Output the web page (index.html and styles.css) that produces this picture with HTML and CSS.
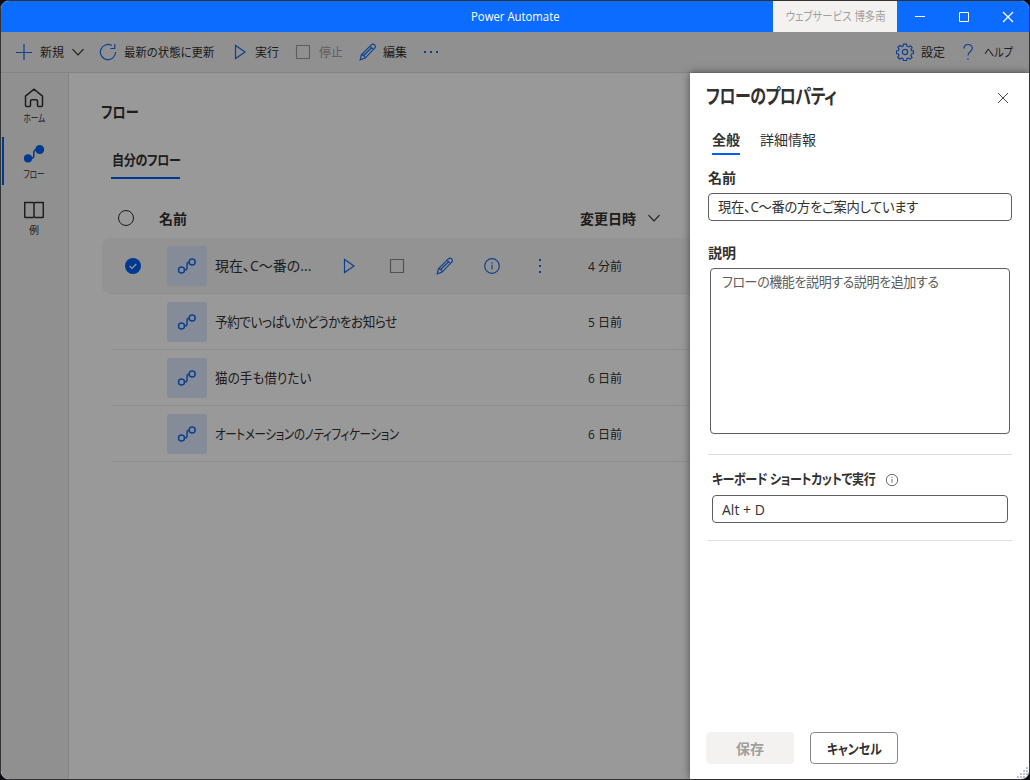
FILE: index.html
```html
<!DOCTYPE html>
<html lang="ja">
<head>
  <meta charset="UTF-8">
  <title>Power Automate</title>
  <link rel="stylesheet" href="styles.css">
</head>
<body>
  <!-- 共通アイコン -->
  <svg class="symbols" width="0" height="0">
    <symbol id="play" viewBox="0 0 16 16"><path d="M2.500 1.500v13l9.500-6.500z"/></symbol>
    <symbol id="stop" viewBox="0 0 16 16"><path d="M1.500 1.500h13v13h-13z"/></symbol>
    <symbol id="pencil" viewBox="0 0 18 18"><path d="M1.200 16.800l1.200-5L12.300 1.900a2.200 2.200 0 0 1 3.300 0 2.200 2.200 0 0 1 0 3.300L6.200 15.100zM2.400 11.800q3.400 0 3.800 3.300M11 3.200l3.400 3.400M4.400 12.800L12.600 4.700"/></symbol>
    <symbol id="flow" viewBox="0 0 20 20"><circle cx="4.500" cy="14" r="3"/><circle cx="15.200" cy="6" r="3"/><path d="M7.500 14h.5c1.500 0 2-1 2-2.500V9c0-2 .6-3 2.200-3"/></symbol>
    <symbol id="chevron" viewBox="0 0 14 14"><path d="M1.500 4.200L7 9.800l5.500-5.600"/></symbol>
    <symbol id="close" viewBox="0 0 12 12"><path d="M1 1l10 10M11 1L1 11"/></symbol>
    <symbol id="info" viewBox="0 0 18 18"><circle cx="9" cy="9" r="7.300"/><path d="M9 7.800v4.700M9 5v1.400"/></symbol>
  </svg>

  <div class="window">
    <header class="titlebar">
      <div class="app-title"><span class="narrow">Power Automate</span></div>
      <div class="account"><span class="narrow">ウェブサービス 博多南</span></div>
      <div class="win-button"><svg width="12" height="12" viewBox="0 0 12 12"><path d="M1 5.500h10"/></svg></div>
      <div class="win-button"><svg width="12" height="12" viewBox="0 0 12 12"><path d="M1.500 1.500h9v9h-9z"/></svg></div>
      <div class="win-button"><svg class="win-close" width="12" height="12"><use href="#close"/></svg></div>
    </header>

    <div class="client">
      <div class="toolbar">
        <div class="tool tool-new">
          <svg width="16" height="16" viewBox="0 0 16 16"><path d="M0 8.500h16M8 0v16"/></svg>
          <span>新規</span>
          <svg class="tool-chevron" width="14" height="14"><use href="#chevron"/></svg>
        </div>
        <div class="tool tool-refresh">
          <svg width="18" height="18" viewBox="0 0 18 18"><path d="M12.800 2.500A7.600 7.600 0 1 0 16.600 9M15.800 1v4.500h-4.500"/></svg>
          <span class="narrow">最新の状態に更新</span>
        </div>
        <div class="tool tool-run">
          <svg width="16" height="16"><use href="#play"/></svg>
          <span>実行</span>
        </div>
        <div class="tool tool-stop">
          <svg width="16" height="16"><use href="#stop"/></svg>
          <span>停止</span>
        </div>
        <div class="tool tool-edit">
          <svg width="18" height="18"><use href="#pencil"/></svg>
          <span>編集</span>
        </div>
        <svg class="dots" width="16" height="16" viewBox="0 0 16 16"><path d="M1 7h2v2H1zM7 7h2v2H7zM13 7h2v2h-2z"/></svg>
        <div class="tool tool-settings">
          <svg width="18" height="18" viewBox="0 0 18 18"><circle cx="9" cy="9" r="2.700"/><path d="M7.500 1.200h3l.5 2 1.500.7 2-1.200 1.600 2-1.100 1.700.5 1.300 2 .4v2.400l-2 .5-.7 1.500 1.200 1.900-2 1.800-1.800-1.100-1.300.6-.4 2h-3l-.5-2-1.400-.7-1.900 1.200-1.900-2 1.200-1.700-.6-1.500-2-.5V8l2-.5.7-1.400-1.200-1.900 2-1.700 1.700 1.100L7 3.200z"/></svg>
          <span>設定</span>
        </div>
        <div class="tool tool-help">
          <svg width="12" height="18" viewBox="0 0 12 18"><path d="M2 5.500C2 3 3.500 1.500 6 1.500s4.300 1.500 4.300 3.800C10.300 8.300 6 8.700 6 12.500M6 15.500v1.500"/></svg>
          <span class="narrow">ヘルプ</span>
        </div>
      </div>

      <div class="body">
        <nav class="sidebar">
          <div class="nav-item">
            <svg width="20" height="20" viewBox="0 0 20 20"><path d="M1.500 8.200L10 1.200l8.500 7v9.300q0 1-1 1h-3q-1 0-1-1v-4.300q0-1.500-1.500-1.500H8q-1.500 0-1.500 1.500v4.300q0 1-1 1h-3q-1 0-1-1z"/></svg>
            <span class="narrow">ホーム</span>
          </div>
          <div class="nav-item active">
            <svg width="20" height="20" viewBox="0 0 20 20"><circle cx="4" cy="14.400" r="3.300"/><circle cx="15.700" cy="5.500" r="3.700"/><path class="link" d="M7 14.400c2 0 2.800-1 2.800-3V9c0-2 1-3.400 3-3.400"/></svg>
            <span class="narrow">フロー</span>
          </div>
          <div class="nav-item">
            <svg width="20" height="20" viewBox="0 0 20 20"><path d="M.7 2.500H9q1 0 1 1v14.300q0-.3-1-.3H1.500q-.8 0-.8-.8zM10 3.500q0-1 1-1h8.300v14.200q0 .8-.8.8H11q-1 0-1 .3"/></svg>
            <span>例</span>
          </div>
        </nav>

        <main class="main">
          <h1><span class="narrow">フロー</span></h1>
          <div class="tab-my"><span class="narrow">自分のフロー</span></div>
          <div class="list-header">
            <span class="radio"></span>
            <span class="col-name">名前</span>
            <span class="col-date">変更日時</span>
            <svg width="14" height="14"><use href="#chevron"/></svg>
          </div>
          <div class="row selected">
            <div class="check"><svg width="10" height="10" viewBox="0 0 10 10"><path d="M1.700 5l2.300 2.300 4.300-4.300"/></svg></div>
            <div class="tile"><svg width="20" height="20"><use href="#flow"/></svg></div>
            <div class="name">現在、C～番の...</div>
            <div class="actions">
              <svg width="16" height="16"><use href="#play"/></svg>
              <svg class="gray" width="16" height="16"><use href="#stop"/></svg>
              <svg width="18" height="18"><use href="#pencil"/></svg>
              <svg width="18" height="18"><use href="#info"/></svg>
              <svg class="dots-v" width="16" height="16" viewBox="0 0 16 16"><path d="M7 1h2v2H7zM7 7h2v2H7zM7 13h2v2H7z"/></svg>
            </div>
            <div class="date">4 分前</div>
          </div>
          <div class="row">
            <div class="check"></div>
            <div class="tile"><svg width="20" height="20"><use href="#flow"/></svg></div>
            <div class="name"><span class="narrow n2">予約でいっぱいかどうかをお知らせ</span></div>
            <div class="date">5 日前</div>
          </div>
          <div class="row">
            <div class="check"></div>
            <div class="tile"><svg width="20" height="20"><use href="#flow"/></svg></div>
            <div class="name"><span class="narrow n3">猫の手も借りたい</span></div>
            <div class="date">6 日前</div>
          </div>
          <div class="row">
            <div class="check"></div>
            <div class="tile"><svg width="20" height="20"><use href="#flow"/></svg></div>
            <div class="name"><span class="narrow n4">オートメーションのノティフィケーション</span></div>
            <div class="date">6 日前</div>
          </div>
        </main>
      </div>

      <div class="overlay"></div>

      <aside class="panel">
        <div class="panel-head">
          <h2><span class="narrow">フローのプロパティ</span></h2>
          <svg width="12" height="12"><use href="#close"/></svg>
        </div>
        <div class="panel-tabs">
          <span class="tab current">全般</span>
          <span class="tab">詳細情報</span>
        </div>
        <label class="label">名前</label>
        <div class="field field-name"><span class="narrow">現在、C～番の方をご案内しています</span></div>
        <label class="label label-desc">説明</label>
        <div class="field field-desc"><span class="narrow">フローの機能を説明する説明を追加する</span></div>
        <div class="shortcut">
          <div class="shortcut-label">
            <span class="narrow">キーボード ショートカットで実行</span>
            <svg width="14" height="14"><use href="#info"/></svg>
          </div>
          <div class="field field-key">Alt + D</div>
        </div>
        <div class="panel-footer">
          <button class="btn btn-save" disabled>保存</button>
          <button class="btn btn-cancel"><span class="narrow">キャンセル</span></button>
        </div>
        <svg class="grip" width="12" height="12" viewBox="0 0 12 12"><path d="M9 0h2v2H9zM6 3h2v2H6zM9 3h2v2H9zM3 6h2v2H3zM6 6h2v2H6zM9 6h2v2H9zM0 9h2v2H0zM3 9h2v2H3zM6 9h2v2H6z"/></svg>
      </aside>
    </div>
  </div>
</body>
</html>
```
FILE: styles.css
```css
* { box-sizing: border-box; }
body {
  margin: 0; background: #0c0c14; color: #323130; overflow: hidden;
  font-family: "Open Sans", "Noto Sans CJK JP", sans-serif; font-size: 14px;
  font-feature-settings: "palt";
}
svg { display: block; flex: none; fill: none; stroke: currentColor; stroke-width: 1.2; }
.symbols { position: absolute; }
/* 幅の狭いUI書体 */
.narrow { display: inline-block; transform-origin: left center; white-space: nowrap; }

.window {
  width: 1030px; height: 780px; border: 1px solid #333; border-radius: 9px;
  overflow: hidden; display: flex; flex-direction: column; background: #fff;
}

/* タイトルバー */
.titlebar { height: 31px; flex: none; display: flex; align-items: center; background: #0b6cff; color: #fff; }
.app-title { width: 303px; margin-left: 470px; font-size: 12px; white-space: nowrap; }
.app-title .narrow { transform: scaleX(0.945); }
.account {
  width: 124px; height: 31px; line-height: 31px; text-align: center; white-space: nowrap;
  background: #f3f2f1; color: #a19f9d; font-size: 12px;
}
.account .narrow { transform: scaleX(0.87); transform-origin: center; }
.win-button { width: 44px; padding-left: 1px; display: flex; justify-content: center; }
.win-button svg { stroke-width: 1; }
.win-button .win-close { stroke-width: 1.3; }

.client { position: relative; flex: 1; display: flex; flex-direction: column; min-height: 0; }

/* ツールバー */
.toolbar {
  height: 41px; flex: none; display: flex; align-items: center;
  padding-left: 15px; background: #f0f0f0; border-bottom: 1px solid #dcdcdc; font-size: 12px;
}
.tool { display: flex; align-items: center; white-space: nowrap; }
.tool svg { color: #1a6cf0; }
.tool-new { width: 83px; gap: 8px; }
.tool-new .tool-chevron { color: #323130; margin-left: -1px; }
.tool-refresh { width: 134px; gap: 7px; }
.tool-refresh .narrow { transform: scaleX(0.95); }
.tool-run { width: 62px; gap: 6px; }
.tool-stop { width: 64px; gap: 8px; color: #a19f9d; }
.tool-stop svg { color: #a19f9d; }
.tool-edit { width: 64px; gap: 6px; }
.dots, .dots-v { fill: #1a6cf0; stroke: none; }
.tool-settings { margin-left: auto; width: 66px; gap: 7px; }
.tool-help { width: 67px; gap: 10px; }
.tool-help .narrow { transform: scaleX(0.84); }

/* サイドバー */
.body { flex: 1; display: flex; }
.sidebar {
  width: 68px; padding: 8px 0 0 1px; background: #f0f0f0; border-right: 1px solid #dcdcdc;
  display: flex; flex-direction: column; gap: 8px;
}
.nav-item {
  height: 48px; padding: 7px 4px 0 0; border-left: 2px solid transparent;
  display: flex; flex-direction: column; align-items: center; gap: 3px;
  font-size: 10px; line-height: 14px;
}
.nav-item .narrow { transform: scaleX(0.77); transform-origin: center; }
.nav-item svg { stroke-width: 1.5; }
.nav-item.active { border-color: #0060f0; }
.nav-item.active svg { color: #0060f0; fill: #0060f0; }
.nav-item .link { fill: none; }

/* フロー一覧 */
.main { flex: 1; padding: 26px 0 0 33px; white-space: nowrap; }
h1 { margin: 0 0 25px -1px; font-size: 16px; line-height: 26px; font-weight: 600; }
h1 .narrow { transform: scaleX(0.82); }
.tab-my {
  width: 69px; height: 29px; margin-left: 9px; padding-left: 1px; line-height: 20px;
  font-weight: 600; letter-spacing: -0.4px; border-bottom: 2px solid #0060f0;
}
.tab-my .narrow { transform: scaleX(0.86); }
.list-header { height: 59px; display: flex; align-items: center; padding: 19px 0 0 16px; font-weight: 600; }
.list-header span:not(.radio) { margin-top: -1px; }
.radio { width: 16px; height: 16px; border: 1px solid #323130; border-radius: 50%; }
.col-name { width: 421px; margin-left: 25px; }
.col-date { width: 67px; }
.row { position: relative; height: 56px; display: flex; align-items: center; padding-left: 23px; }
.row::after {
  content: ""; position: absolute; left: 9px; right: 0; bottom: 0; height: 1px; background: #ebebeb;
}
.row.selected { background: #f5f5f5; border-radius: 8px; }
.check { width: 16px; height: 16px; border-radius: 50%; padding: 3px; color: #fff; }
.selected .check { background: #0060f0; }
.tile {
  width: 40px; height: 40px; margin-left: 26px; border-radius: 2px; background: #dfeafc; color: #1a6cf0;
  display: flex; align-items: center; justify-content: center;
}
.tile svg { stroke-width: 1.5; }
.name { width: 373px; margin-left: 8px; padding-bottom: 2px; }
.selected .name { width: 127px; }
.n2 { letter-spacing: -0.5px; transform: scaleX(0.9); }
.n3 { transform: scaleX(0.9); }
.n4 { letter-spacing: -0.35px; transform: scaleX(0.82); }
.actions { width: 246px; display: flex; align-items: center; color: #1a6cf0; }
.actions svg { margin-right: 31px; }
.actions svg:nth-child(3) { margin-right: 29px; }
.actions svg:nth-child(4) { margin-right: 31px; }
.actions .gray { color: #8a8886; }
.date { font-size: 12px; padding-bottom: 1px; }

/* モーダル背景 */
.overlay { position: absolute; inset: 0; background: rgba(0, 0, 0, 0.4); }

/* プロパティパネル */
.panel {
  position: absolute; top: 41px; right: 0; bottom: 0; width: 339px; padding: 0 17px 15px 16px;
  background: #fff; box-shadow: 0 0 8px rgba(0, 0, 0, 0.5);
  display: flex; flex-direction: column;
  white-space: nowrap;
}
.panel-head { height: 50px; display: flex; align-items: center; justify-content: space-between; padding-right: 3px; }
.panel-head svg { stroke-width: 0.9; }
h2 { width: 140px; margin: 0 0 5px; font-size: 20px; font-weight: 600; letter-spacing: -0.7px; }
h2 .narrow { transform: scaleX(0.8); }
.panel-tabs { display: flex; gap: 20px; margin-left: 6px; line-height: 20px; padding-top: 7px; }
.tab { height: 25px; }
.tab.current { font-weight: 600; border-bottom: 2px solid #0060f0; }
.label { margin: 13px 0 5px 2px; line-height: 20px; font-weight: 600; }
.label-desc { margin-top: 22px; }
.field { border: 1px solid #605e5c; border-radius: 4px; margin-left: 2px; padding-left: 9px; line-height: 25px; }
.field-name { width: 304px; height: 28px; letter-spacing: -0.3px; }
.field-name .narrow { transform: scaleX(0.95); }
.field-desc { width: 300px; height: 166px; margin-left: 4px; padding-left: 11px; color: #605e5c; letter-spacing: -0.45px; }
.field-desc .narrow { transform: scaleX(0.93); }
.shortcut {
  width: 304px; height: 87px; margin: 20px 0 0 2px; padding: 15px 4px 0;
  border: solid #dedede; border-width: 1px 0;
}
.shortcut-label { display: flex; align-items: center; gap: 8px; height: 20px; line-height: 18px; margin-bottom: 5px; font-weight: 600; }
.shortcut-label .narrow { width: 165px; margin-top: -2px; letter-spacing: -0.4px; transform: scaleX(0.86); }
.shortcut-label .narrow { margin-right: 0; }
.shortcut-label svg { stroke-width: 1.2; color: #605e5c; }
.field-key { width: 296px; height: 28px; margin: 0; line-height: 28px; }
.panel-footer { margin-top: auto; display: flex; gap: 16px; }
.btn {
  width: 88px; height: 32px; padding: 0; border: 1px solid #8a8886; border-radius: 4px; background: #fff;
  font: inherit; font-weight: 600; color: #323130;
}
.btn-save { background: #f3f2f1; border-color: #f3f2f1; color: #a19f9d; }
.btn-cancel .narrow { transform: scaleX(0.85); transform-origin: center; }
.grip { position: absolute; right: 0; bottom: 0; fill: #bcc4d4; stroke: none; }
```
